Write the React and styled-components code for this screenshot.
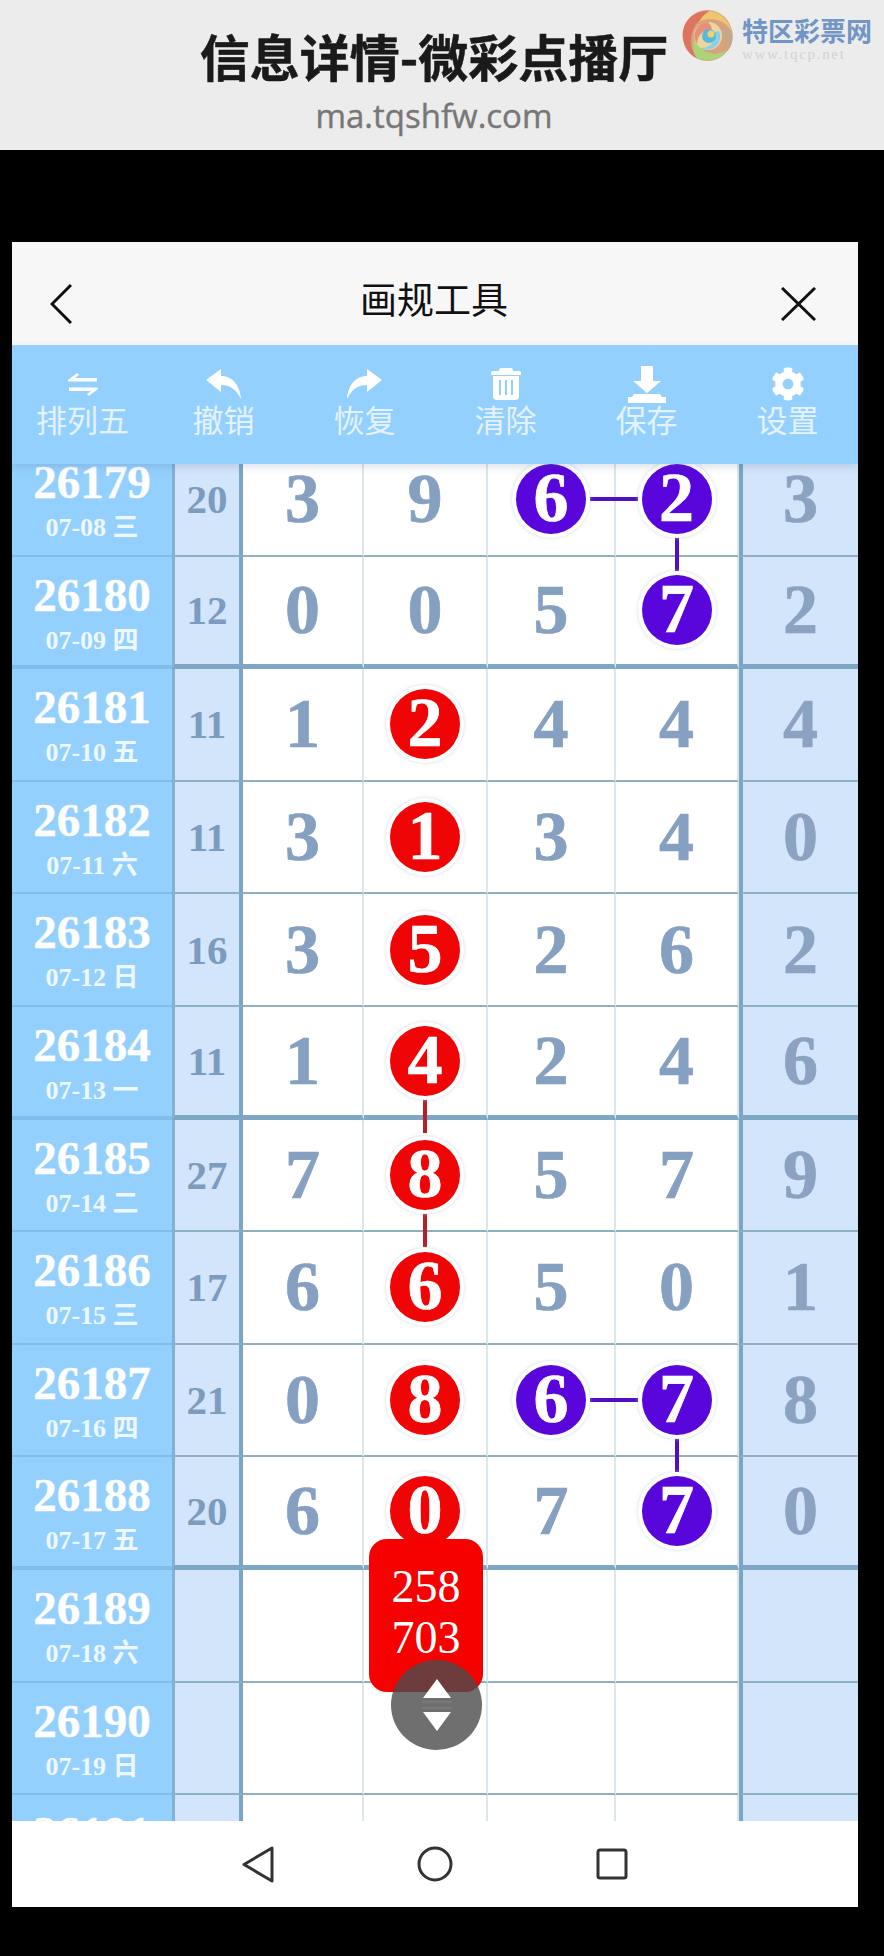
import React from "react";
import styled, { createGlobalStyle } from "styled-components";
import { FaCog } from "react-icons/fa";

const SANS = `"Noto Sans CJK SC", "Noto Sans", sans-serif`;
const SERIF = `"Liberation Serif", "Noto Sans CJK SC", serif`;

const GlobalStyle = createGlobalStyle`
  html, body {
    margin: 0;
    padding: 0;
    background: #000;
  }
  * {
    box-sizing: border-box;
  }
`;

const Page = styled.div`
  position: relative;
  width: 884px;
  height: 1956px;
  background: #000;
  overflow: hidden;
`;

const TopBar = styled.header`
  position: relative;
  height: 150px;
  background: #ececec;
  padding: 21px 16px 0 0;
  display: flex;
  flex-direction: column;
  align-items: center;
`;

const TopTitle = styled.div`
  font-family: ${SANS};
  font-size: 50px;
  font-weight: 700;
  line-height: 68px;
  color: #1a1a1a;
  -webkit-text-stroke: 0.5px #1a1a1a;
  white-space: nowrap;
`;

const TopUrl = styled.div`
  font-family: "Open Sans", sans-serif;
  font-size: 33px;
  line-height: 44px;
  margin-top: 5px;
  color: #777;
  -webkit-text-stroke: 0.4px #777;
`;

const Watermark = styled.div`
  position: absolute;
  left: 682px;
  top: 10px;
  display: flex;
  gap: 9px;
`;

const WatermarkText = styled.div`
  display: flex;
  flex-direction: column;
  padding-top: 4px;
`;

const WatermarkName = styled.div`
  font-family: ${SANS};
  font-size: 26px;
  font-weight: 700;
  line-height: 32px;
  color: #7095c6;
  white-space: nowrap;
`;

const WatermarkUrl = styled.div`
  font-family: ${SERIF};
  font-size: 15px;
  line-height: 16px;
  letter-spacing: 1.7px;
  color: #d2d2d2;
  white-space: nowrap;
`;

const Phone = styled.main`
  width: 846px;
  margin: 92px 0 0 12px;
  display: flex;
  flex-direction: column;
`;

const Header = styled.div`
  height: 103px;
  background: #f7f7f7;
  padding: 20px 42px 0 38px;
  display: grid;
  grid-template-columns: 1fr auto 1fr;
  align-items: center;
`;

const HeaderTitle = styled.div`
  font-family: ${SANS};
  font-size: 37px;
  line-height: 50px;
  margin: 0 0 12px 2px;
  color: #111;
`;

const HeaderIcon = styled.svg`
  display: block;
  justify-self: ${(p) => p.$side};
  fill: none;
  stroke: #111;
  stroke-width: 3;
`;

const Toolbar = styled.nav`
  position: relative;
  z-index: 5;
  height: 119px;
  background: #94d0fe;
  box-shadow: 0 3px 8px rgba(60, 90, 120, 0.18);
  display: flex;
  padding-top: 20px;
`;

const ToolItem = styled.div`
  flex: 1;
  display: flex;
  flex-direction: column;
  align-items: center;
`;

const ToolIcon = styled.div`
  height: 38px;
  display: flex;
  align-items: center;
  justify-content: center;
  color: #fff;
`;

const ToolLabel = styled.div`
  font-family: ${SANS};
  font-size: 31px;
  line-height: 40px;
  margin-top: -4px;
  color: #e4f3ff;
  white-space: nowrap;
`;

const Scroller = styled.section`
  position: relative;
  height: 1357px;
  overflow: hidden;
  background: #fff;
`;

const Rows = styled.div`
  margin-top: -20px;
`;

const Row = styled.div`
  display: grid;
  grid-template-columns: 160px 71px 121px 124px 128px 123px 119px;
  height: 112.6px;
`;

const LabelCell = styled.div`
  background: #94d0fe;
  border-bottom: ${(p) => (p.$thick ? "4px solid #80bdec" : "2px solid #80bdec")};
  padding-top: 11px;
  display: flex;
  flex-direction: column;
  align-items: center;
  color: #fff;
  font-family: ${SERIF};
  font-weight: 700;
`;

const Issue = styled.div`
  font-size: 47px;
  line-height: 54px;
  -webkit-text-stroke: 0.4px #fff;
`;

const DateText = styled.div`
  font-size: 26px;
  line-height: 32px;
  margin-top: 3px;
  color: #eef8ff;
`;

const SumCell = styled.div`
  background: #d2e5fa;
  border-left: 3px solid #80b2d8;
  border-right: 4px solid #7aa6c6;
  border-bottom: ${(p) => (p.$thick ? "5px solid #7ea7c4" : "2px solid #8fb0be")};
  display: flex;
  align-items: center;
  justify-content: center;
  font-family: ${SERIF};
  font-weight: 700;
  font-size: 41px;
  color: #7b9bbf;
`;

const NumCell = styled.div`
  position: relative;
  background: ${(p) => (p.$tail ? "#d2e5fa" : "#fff")};
  border-left: ${(p) => (p.$tail ? "4px solid #7aa6c6" : "none")};
  border-right: ${(p) => (p.$tail ? "none" : "2px solid #dbe7ec")};
  border-bottom: ${(p) => (p.$thick ? "5px solid #7ea7c4" : "2px solid #8fb0be")};
  display: flex;
  align-items: center;
  justify-content: center;
  font-family: ${SERIF};
  font-weight: 700;
  font-size: 70px;
  line-height: 1;
  -webkit-text-stroke: 0.7px currentColor;
  color: ${(p) => (p.$tail ? "#8ba3c0" : "#85a0c0")};
`;

const BALL = { r: "#ef0505", p: "#5806dc" };
const LINK = { r: "#b3202a", p: "#4f0fc4" };

const Ball = styled.div`
  position: relative;
  z-index: 2;
  width: 70px;
  height: 70px;
  border-radius: 50%;
  background: ${(p) => BALL[p.$c]};
  box-shadow: 0 0 0 4px #fff, 0 0 3px 5px rgba(190, 200, 205, 0.4);
  color: #fff;
  display: flex;
  align-items: center;
  justify-content: center;
  padding-bottom: 2px;
`;

const LinkAcross = styled.div`
  position: absolute;
  z-index: 1;
  top: 50%;
  left: calc(50% + 39px);
  width: 50px;
  height: 4px;
  margin-top: -2px;
  background: ${(p) => LINK[p.$c]};
`;

const LinkDown = styled.div`
  position: absolute;
  z-index: 1;
  top: calc(50% + 37px);
  left: 50%;
  width: 4px;
  height: 35px;
  margin-left: -2px;
  background: ${(p) => LINK[p.$c]};
`;

const Bubble = styled.div`
  position: absolute;
  z-index: 3;
  left: 357px;
  top: 1075px;
  width: 114px;
  height: 153px;
  border-radius: 18px;
  background: #f60000;
  padding-top: 22px;
  font-family: ${SERIF};
  font-size: 46px;
  line-height: 51px;
  color: #fff;
  text-align: center;
`;

const Scrub = styled.div`
  position: absolute;
  z-index: 4;
  left: 379px;
  top: 1196px;
  width: 91px;
  height: 90px;
  border-radius: 50%;
  background: rgba(75, 75, 75, 0.8);
  display: flex;
  align-items: center;
  justify-content: center;
`;

const NavBar = styled.footer`
  height: 86px;
  background: #fff;
  display: flex;
  align-items: center;
  justify-content: center;
`;

const NavSlot = styled.div`
  width: 177px;
  display: flex;
  justify-content: center;
`;

const NavIcon = styled.svg`
  display: block;
  fill: none;
  stroke: #333;
  stroke-width: 3;
  stroke-linejoin: round;
`;

const rows = [
  { id: 26179, date: "07-08 三", sum: 20, nums: [3, 9, { v: 6, c: "p", h: 1 }, { v: 2, c: "p", d: 1 }, 3] },
  { id: 26180, date: "07-09 四", sum: 12, nums: [0, 0, 5, { v: 7, c: "p" }, 2], thick: 1 },
  { id: 26181, date: "07-10 五", sum: 11, nums: [1, { v: 2, c: "r" }, 4, 4, 4] },
  { id: 26182, date: "07-11 六", sum: 11, nums: [3, { v: 1, c: "r" }, 3, 4, 0] },
  { id: 26183, date: "07-12 日", sum: 16, nums: [3, { v: 5, c: "r" }, 2, 6, 2] },
  { id: 26184, date: "07-13 一", sum: 11, nums: [1, { v: 4, c: "r", d: 1 }, 2, 4, 6], thick: 1 },
  { id: 26185, date: "07-14 二", sum: 27, nums: [7, { v: 8, c: "r", d: 1 }, 5, 7, 9] },
  { id: 26186, date: "07-15 三", sum: 17, nums: [6, { v: 6, c: "r" }, 5, 0, 1] },
  { id: 26187, date: "07-16 四", sum: 21, nums: [0, { v: 8, c: "r" }, { v: 6, c: "p", h: 1 }, { v: 7, c: "p", d: 1 }, 8] },
  { id: 26188, date: "07-17 五", sum: 20, nums: [6, { v: 0, c: "r" }, 7, { v: 7, c: "p" }, 0], thick: 1 },
  { id: 26189, date: "07-18 六", nums: ["", "", "", "", ""] },
  { id: 26190, date: "07-19 日", nums: ["", "", "", "", ""] },
  { id: 26191, date: "07-20 一", nums: ["", "", "", "", ""] },
];

const SwapIcon = () => (
  <svg width="30" height="23" viewBox="0 0 30 23" fill="currentColor">
    <path d="M0 7 L9 0 L11 2 L7 5 H29 V8.5 H0Z" />
    <path d="M30 16 L21 23 L19 21 L23 18 H1 V14.5 H30Z" />
  </svg>
);

const ReplyIcon = ({ flip }) => (
  <svg width="35" height="30" viewBox="0 0 35 30" fill="currentColor" style={flip ? { transform: "scaleX(-1)" } : undefined}>
    <path d="M0 11 L15 0 V7 C27 7 34 17 35 30 C30 20 24 16 15 16 V23Z" />
  </svg>
);

const TrashIcon = () => (
  <svg width="30" height="32" viewBox="0 0 30 32">
    <path fill="currentColor" d="M10 0 H20 Q22 0 22 3 H29 Q30 3 30 5 V7 H0 V5 Q0 3 1 3 H8 Q8 0 10 0Z" />
    <path fill="currentColor" d="M2 8 H28 V28 Q28 32 24 32 H6 Q2 32 2 28Z" />
    <path stroke="#94d0fe" strokeWidth="2" d="M9 12 V27 M15 12 V27 M21 12 V27" />
  </svg>
);

const SaveIcon = () => (
  <svg width="38" height="37" viewBox="0 0 38 37" fill="currentColor">
    <path d="M13 0 H25 V15 H33 L19 27 L5 15 H13Z" />
    <path d="M0 31 H4 L6 28 H32 L34 31 H38 V37 H0Z" />
  </svg>
);

const tools = [
  { label: "排列五", icon: <SwapIcon /> },
  { label: "撤销", icon: <ReplyIcon /> },
  { label: "恢复", icon: <ReplyIcon flip /> },
  { label: "清除", icon: <TrashIcon /> },
  { label: "保存", icon: <SaveIcon /> },
  { label: "设置", icon: <FaCog size={34} /> },
];

const SwirlLogo = () => (
  <svg width="51" height="51" viewBox="0 0 51 51">
    <ellipse cx="25.5" cy="25.5" rx="25" ry="25.5" fill="#d9a27e" />
    <path d="M25 1 C10 1 0 13 1 27 C2 38 8 45 15 48 C9 40 7 30 11 20 C14 12 20 7 32 4 Z" fill="#dc7460" />
    <path d="M28 1 C38 2 47 10 50 22 C46 14 38 9 28 9 C24 9 20 10 17 12 C20 6 24 3 28 1Z" fill="#ecc76e" />
    <path d="M15 48 C24 52 38 51 45 40 C38 45 28 45 21 40 C16 36 13 30 14 24 C10 32 10 42 15 48Z" fill="#a9d477" />
    <path d="M50 22 C52 30 49 38 45 41 C47 32 44 22 36 17 C40 17 47 18 50 22Z" fill="#c2a98c" />
    <circle cx="26" cy="26" r="14" fill="#ecd6a0" />
    <path d="M26 12 A14 14 0 0 0 15 34 C15 26 20 20 30 19 A12 12 0 0 0 26 12Z" fill="#e69078" />
    <path d="M37 21 A13 13 0 0 1 19 38 C28 38 34 32 33 22Z" fill="#8cd0e6" />
    <circle cx="27" cy="26" r="7" fill="#58b8e0" />
    <circle cx="29" cy="24" r="3.5" fill="#f0d366" />
  </svg>
);

function NumberCell({ value, tail, thick }) {
  const ball = value !== null && typeof value === "object";
  return (
    <NumCell $tail={tail} $thick={thick}>
      {ball ? <Ball $c={value.c}>{value.v}</Ball> : value}
      {ball && value.h && <LinkAcross $c={value.c} />}
      {ball && value.d && <LinkDown $c={value.c} />}
    </NumCell>
  );
}

function App() {
  return (
    <Page>
      <GlobalStyle />
      <TopBar>
        <TopTitle>信息详情-微彩点播厅</TopTitle>
        <TopUrl>ma.tqshfw.com</TopUrl>
        <Watermark>
          <SwirlLogo />
          <WatermarkText>
            <WatermarkName>特区彩票网</WatermarkName>
            <WatermarkUrl>www.tqcp.net</WatermarkUrl>
          </WatermarkText>
        </Watermark>
      </TopBar>

      <Phone>
        <Header>
          <HeaderIcon $side="start" width="22" height="40" viewBox="0 0 22 40">
            <path d="M21 1 L2 20 L21 39" />
          </HeaderIcon>
          <HeaderTitle>画规工具</HeaderTitle>
          <HeaderIcon $side="end" width="35" height="34" viewBox="0 0 35 34">
            <path d="M1 1 L34 33 M34 1 L1 33" />
          </HeaderIcon>
        </Header>

        <Toolbar>
          {tools.map((tool) => (
            <ToolItem key={tool.label}>
              <ToolIcon>{tool.icon}</ToolIcon>
              <ToolLabel>{tool.label}</ToolLabel>
            </ToolItem>
          ))}
        </Toolbar>

        <Scroller>
          <Rows>
            {rows.map((row) => (
              <Row key={row.id}>
                <LabelCell $thick={row.thick}>
                  <Issue>{row.id}</Issue>
                  <DateText>{row.date}</DateText>
                </LabelCell>
                <SumCell $thick={row.thick}>{row.sum}</SumCell>
                {row.nums.map((n, i) => (
                  <NumberCell key={i} value={n} tail={i === 4} thick={row.thick} />
                ))}
              </Row>
            ))}
          </Rows>
          <Bubble>
            258
            <br />
            703
          </Bubble>
          <Scrub>
            <svg width="32" height="53" viewBox="0 0 32 53">
              <path d="M16 0 L30 19 H2Z" fill="#fff" />
              <path d="M16 52 L30 33 H2Z" fill="#fff" />
              <path d="M1 23 H31 M1 29 H31" stroke="#7d7d7d" strokeWidth="1.5" />
            </svg>
          </Scrub>
        </Scroller>

        <NavBar>
          <NavSlot>
            <NavIcon width="32" height="37" viewBox="0 0 32 37">
              <path d="M30 2 V35 L2 18.5Z" />
            </NavIcon>
          </NavSlot>
          <NavSlot>
            <NavIcon width="36" height="36" viewBox="0 0 36 36">
              <circle cx="18" cy="18" r="16" />
            </NavIcon>
          </NavSlot>
          <NavSlot>
            <NavIcon width="32" height="32" viewBox="0 0 32 32">
              <rect x="2" y="2" width="28" height="28" rx="2" />
            </NavIcon>
          </NavSlot>
        </NavBar>
      </Phone>
    </Page>
  );
}

export default App;
